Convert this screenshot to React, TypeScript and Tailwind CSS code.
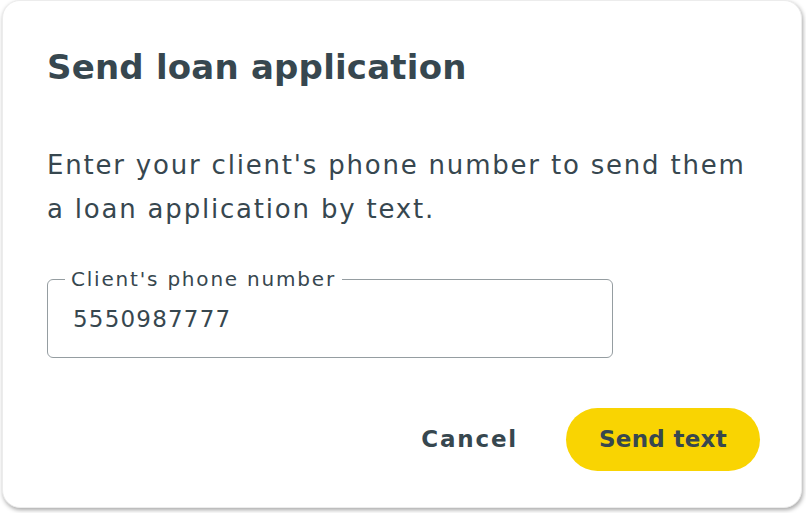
import { useState } from 'react';

// Send loan application dialog

export default function App() {
    const [phone, setPhone] = useState('5550987777');

    return (
        <div className="w-[806px] h-[513px] bg-white" style={{ fontFamily: '"DejaVu Sans", "Noto Sans", sans-serif' }}>
            <div className="ml-[2px] w-[800px] h-[508px] rounded-[18px] bg-white shadow-[1px_2px_4px_rgba(0,0,0,0.35)] border border-[#ececec] pl-[44px] pr-[41px] pt-[44px] text-[#37474f]">
                <h2 className="text-[34px] font-bold leading-[44px] tracking-[0.2px]">Send loan application</h2>

                <p className="mt-[54px] text-[26px] leading-[44px] tracking-[1.8px] max-w-[710px]">
                    Enter your client's phone number to send them a loan application by text.
                </p>

                <fieldset className="mt-[38px] w-[566px] h-[89px] border border-[#959da1] rounded-[6px] px-[17px] pb-0">
                    <legend className="px-[6px] text-[20px] leading-[20px] tracking-[1.8px] text-[#37474f]">Client's phone number</legend>
                    <input
                        value={phone}
                        onChange={e => setPhone(e.target.value)}
                        className="w-full bg-transparent outline-none text-[23px] leading-[40px] tracking-[1.2px] text-[#37474f] mt-[10px] px-[8px]"
                    />
                </fieldset>

                <div className="mt-[50px] flex items-center justify-end gap-[48px]">
                    <button className="text-[23px] font-bold tracking-[1.8px] text-[#37474f] cursor-pointer">Cancel</button>
                    <button className="h-[63px] w-[194px] rounded-full bg-[#f9d402] text-[23px] font-bold tracking-[0.3px] text-[#37474f] cursor-pointer">
                        Send text
                    </button>
                </div>
            </div>
        </div>
    );
}
